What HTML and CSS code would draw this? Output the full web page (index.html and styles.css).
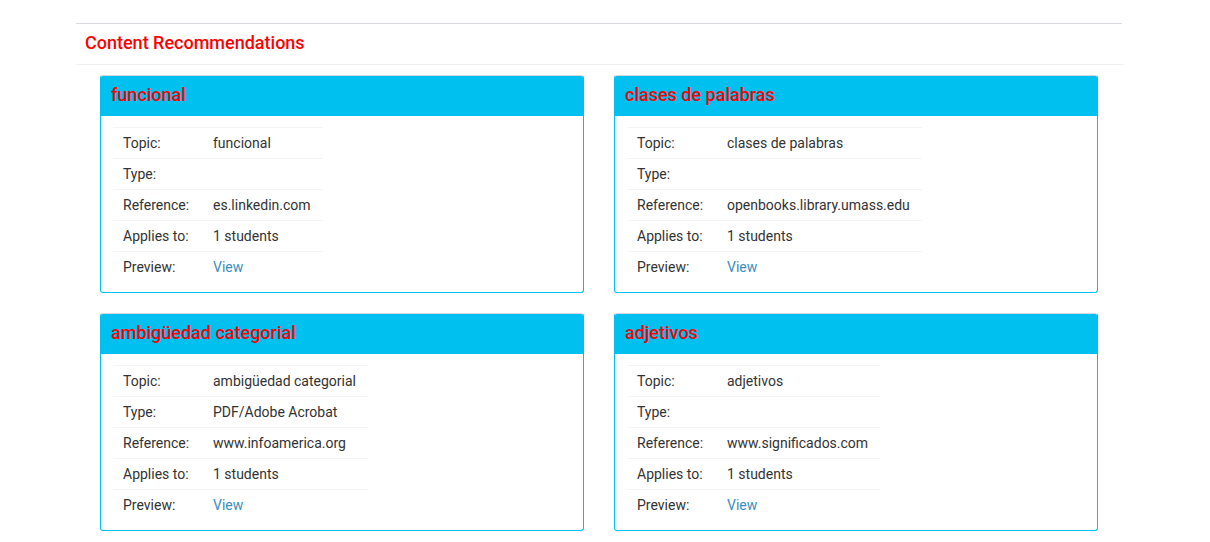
FILE: index.html
```html
<!DOCTYPE html>
<html>
<head>
<meta charset="utf-8">
<link rel="stylesheet" href="styles.css">
</head>
<body>
<div class="panel">
  <div class="panel-head">Content Recommendations</div>
  <div class="grid">
    <div class="card">
      <div class="card-head">funcional</div>
      <div class="card-body">
        <table class="info">
          <tr><td class="lbl">Topic:</td><td>funcional</td></tr>
          <tr><td class="lbl">Type:</td><td></td></tr>
          <tr><td class="lbl">Reference:</td><td>es.linkedin.com</td></tr>
          <tr><td class="lbl">Applies to:</td><td>1 students</td></tr>
          <tr><td class="lbl">Preview:</td><td><a href="#">View</a></td></tr>
        </table>
      </div>
    </div>
    <div class="card">
      <div class="card-head">clases de palabras</div>
      <div class="card-body">
        <table class="info">
          <tr><td class="lbl">Topic:</td><td>clases de palabras</td></tr>
          <tr><td class="lbl">Type:</td><td></td></tr>
          <tr><td class="lbl">Reference:</td><td>openbooks.library.umass.edu</td></tr>
          <tr><td class="lbl">Applies to:</td><td>1 students</td></tr>
          <tr><td class="lbl">Preview:</td><td><a href="#">View</a></td></tr>
        </table>
      </div>
    </div>
    <div class="card">
      <div class="card-head">ambigüedad categorial</div>
      <div class="card-body">
        <table class="info">
          <tr><td class="lbl">Topic:</td><td>ambigüedad categorial</td></tr>
          <tr><td class="lbl">Type:</td><td>PDF/Adobe Acrobat</td></tr>
          <tr><td class="lbl">Reference:</td><td>www.infoamerica.org</td></tr>
          <tr><td class="lbl">Applies to:</td><td>1 students</td></tr>
          <tr><td class="lbl">Preview:</td><td><a href="#">View</a></td></tr>
        </table>
      </div>
    </div>
    <div class="card">
      <div class="card-head">adjetivos</div>
      <div class="card-body">
        <table class="info">
          <tr><td class="lbl">Topic:</td><td>adjetivos</td></tr>
          <tr><td class="lbl">Type:</td><td></td></tr>
          <tr><td class="lbl">Reference:</td><td>www.significados.com</td></tr>
          <tr><td class="lbl">Applies to:</td><td>1 students</td></tr>
          <tr><td class="lbl">Preview:</td><td><a href="#">View</a></td></tr>
        </table>
      </div>
    </div>
  </div>
</div>
</body>
</html>
```
FILE: styles.css
```css
html, body {
  margin: 0;
  padding: 0;
  background: #fff;
  font-family: Roboto, "Liberation Sans", sans-serif;
  font-size: 14px;
  color: #333;
}
.panel {
  margin: 23px 88px 0 76px;
  border-top: 1px solid #d8dadf;
}
.panel-head {
  color: #ff0000;
  font-size: 18px;
  font-weight: 500;
  line-height: 20px;
  padding: 9px 9px 11px;
  border-bottom: 1px solid #f0f0f0;
  margin-right: -2px;
}
.grid {
  display: grid;
  grid-template-columns: 1fr 1fr;
  column-gap: 30px;
  row-gap: 20px;
  padding: 10px 24px 0;
}
.card {
  border: 1px solid #00c0ef;
  border-top-color: #d2d6de;
  border-radius: 3px;
  overflow: hidden;
}
.card-head {
  background: #00c0ef;
  color: #ff0000;
  font-size: 18px;
  font-weight: 500;
  line-height: 20px;
  padding: 9px 10px 11px;
}
.card-body {
  padding: 11px 11px 10px 12px;
}
.info {
  border-collapse: collapse;
}
.info td {
  border-top: 1px solid #f4f4f4;
  padding: 5px 12px 5px 10px;
  line-height: 20px;
  vertical-align: top;
  white-space: nowrap;
}
.info td.lbl {
  width: 68px;
}
.info a {
  color: #3c8dbc;
  text-decoration: none;
}
```
